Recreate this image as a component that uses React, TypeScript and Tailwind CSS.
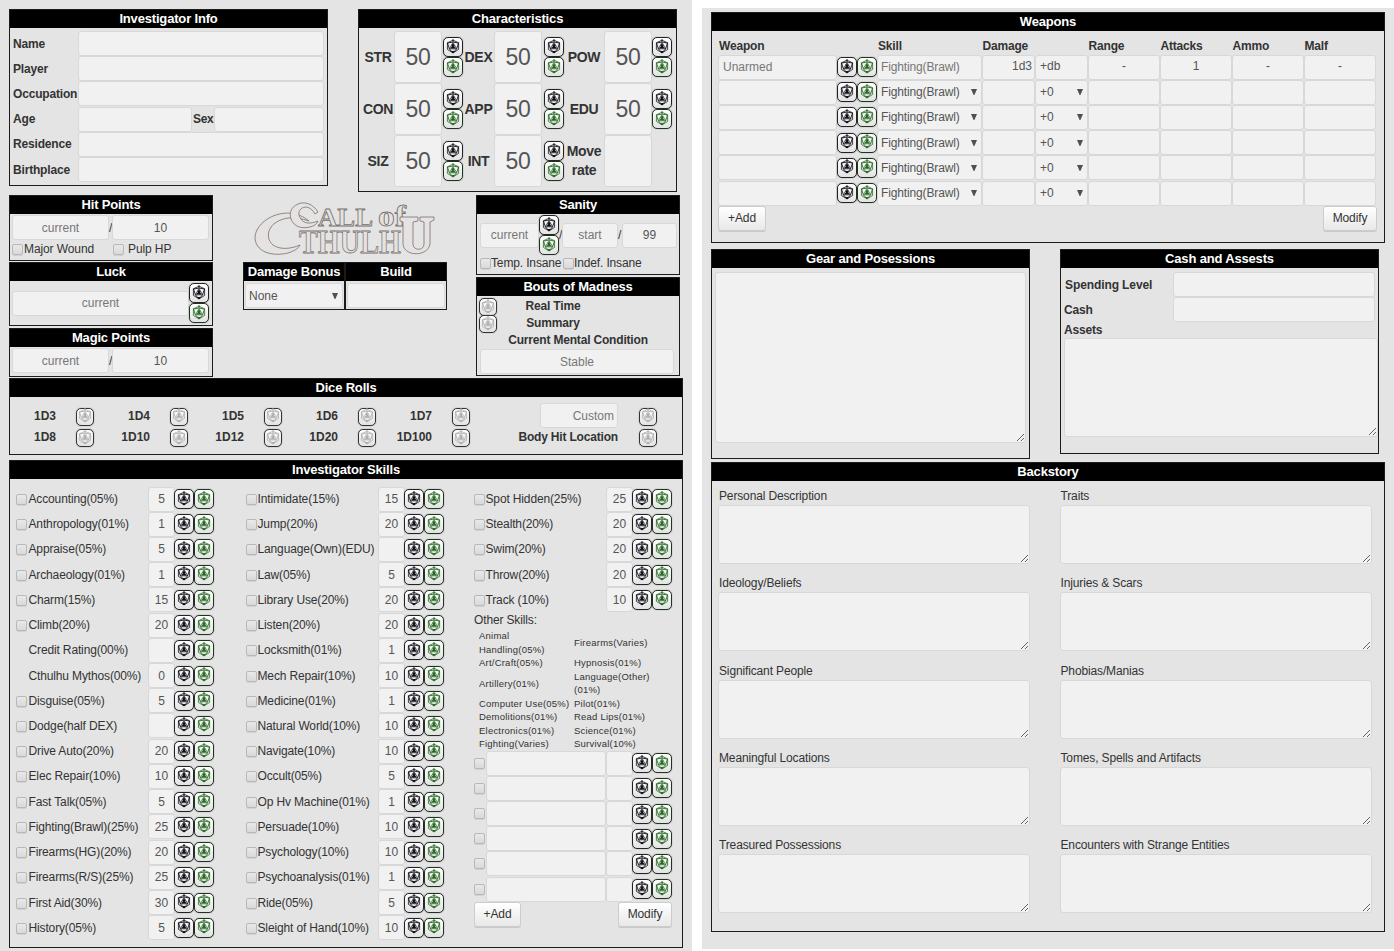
import React from "react";

function Panel({ title, className = "", children }: { title: string; className?: string; children?: React.ReactNode }) {
  return (
    <section className={"flex flex-col border border-[#1c1c1c] " + className}>
      <h2 className="h-[18px] shrink-0 bg-black text-center text-[13px] leading-[17px] font-bold tracking-[-0.17px] text-white">{title}</h2>
      {children}
    </section>
  );
}

const fieldBase =
  "block shrink-0 rounded-[3px] border border-[#d8d8d8] bg-[#f1f1f1] text-[#555] outline-none placeholder:text-[#777] ";

function Field({ className = "", value, hint }: { className?: string; value?: string; hint?: string }) {
  return <input className={fieldBase + "h-[25px] min-w-0 " + className} defaultValue={value} placeholder={hint} />;
}

function Choice({ className = "", value }: { className?: string; value: string }) {
  return (
    <div className={fieldBase + "flex h-[25px] items-center justify-between pr-[4px] pl-[4px] " + className}>
      <span>{value}</span>
      <svg width="6" height="6" viewBox="0 0 6 6" className="shrink-0">
        <path d="M0 0h6L3.4 6h-.8z" fill="#505050" />
      </svg>
    </div>
  );
}

function Area({ className = "" }: { className?: string }) {
  return <textarea className={fieldBase + "resize " + className} />;
}

function Check({ className = "" }: { className?: string }) {
  return (
    <input
      type="checkbox"
      className={
        "block h-[11px] w-[11px] shrink-0 appearance-none rounded-[2px] border border-[#b8b8b8] bg-linear-to-b from-[#e9e9e9] to-[#d9d9d9] shadow-[0_1px_0_#d2d2d2] " +
        className
      }
    />
  );
}

type Tone = "black" | "green" | "pale";

const tones: Record<Tone, { line: string; box: string }> = {
  black: { line: "text-[#101018]", box: "border-[#222] h-5 w-5" },
  green: { line: "text-[#286a24]", box: "border-[#1f331f] h-5 w-5" },
  pale: { line: "text-[#b0b0b4]", box: "border-[#333] h-[18px] w-[18px]" },
};

function Die({ tone, className = "" }: { tone: Tone; className?: string }) {
  const t = tones[tone];
  return (
    <button
      className={
        "flex shrink-0 items-center justify-center rounded-[5px] border bg-linear-to-b from-white to-[#e3e3e3] shadow-[0_0_1px_#555] " +
        t.box +
        " " +
        t.line +
        " " +
        className
      }
    >
      <svg width="14" height="15" viewBox="0 0 14 15" fill="none" stroke="currentColor" className="mb-[2px] shrink-0">
        <path d="M7 1.2 12.6 3.8v6.6L7 14 1.4 10.4V3.8z" strokeWidth="0.8" />
        <path d="M1.4 3.8 3.4 9.8 7 14l3.6-4.2 2-6M1.4 4.1 7 3l5.6 1.1M7 0v3" strokeWidth="0.9" />
        <path d="M7 3.4 3.4 9.8h7.2z" strokeWidth="0.7" />
        <path d="M7 4.4 8.5 6.3 8.1 7.3 9.8 9.6H4.2L5.9 7.3l-.4-1z" fill="currentColor" stroke="none" />
        <path d="M5.4 11.9 7 13.9l1.6-2z" fill="currentColor" stroke="none" />
      </svg>
    </button>
  );
}

function DicePair({ vertical = false, className = "" }: { vertical?: boolean; className?: string }) {
  return (
    <div className={(vertical ? "flex w-5 flex-col " : "flex ") + "shrink-0 " + className}>
      <Die tone="black" />
      <Die tone="green" />
    </div>
  );
}

function Info() {
  const label = "w-[68px] shrink-0 font-bold tracking-[-0.18px]";
  const row = "flex h-[25.2px] items-center";
  return (
    <Panel title="Investigator Info" className="h-[177px] w-[319px]">
      <div className="pt-[3px] pl-[3px]">
        {["Name", "Player", "Occupation"].map((n) => (
          <div key={n} className={row}>
            <span className={label}>{n}</span>
            <Field className="ml-[-3px] w-[246px]" />
          </div>
        ))}
        <div className={row}>
          <span className={label}>Age</span>
          <Field className="ml-[-3px] w-[114px]" />
          <span className="w-[22px] pl-px font-bold tracking-[-0.3px]">Sex</span>
          <Field className="w-[110px]" />
        </div>
        {["Residence", "Birthplace"].map((n) => (
          <div key={n} className={row}>
            <span className={label}>{n}</span>
            <Field className="ml-[-3px] w-[246px]" />
          </div>
        ))}
      </div>
    </Panel>
  );
}

function Stat({ name, labelWidth, diceGap = "ml-px" }: { name: string; labelWidth: string; diceGap?: string }) {
  return (
    <>
      <span className={"shrink-0 text-center text-[14px] leading-[19px] font-bold tracking-[-0.3px] " + labelWidth}>{name}</span>
      <input className={fieldBase + "h-[52px] w-12 text-center text-[23px] tracking-[-0.2px]"} defaultValue={name === "Move rate" ? "" : "50"} />
      {name !== "Move rate" && <DicePair vertical className={diceGap} />}
    </>
  );
}

function Characteristics() {
  const rows = [
    ["STR", "DEX", "POW"],
    ["CON", "APP", "EDU"],
    ["SIZ", "INT", "Move rate"],
  ];
  return (
    <Panel title="Characteristics" className="h-[183px] w-[319px]">
      <div className="pt-[3px] pl-[3px]">
        {rows.map((r) => (
          <div key={r[0]} className="flex h-[52px] items-center">
            <Stat name={r[0]} labelWidth="w-8" />
            <Stat name={r[1]} labelWidth="w-[31px]" diceGap="ml-[2px]" />
            <Stat name={r[2]} labelWidth="w-10 px-px" diceGap="ml-0" />
          </div>
        ))}
      </div>
    </Panel>
  );
}

function Points() {
  return (
    <div className="flex items-center pl-[2px]">
      <Field className="w-[97px] text-center" hint="current" />
      <span className="w-[3px]">/</span>
      <Field className="w-[97px] text-center" value="10" />
    </div>
  );
}

function Logo() {
  return (
    <svg
      width="184"
      height="58"
      viewBox="0 0 184 58"
      className="ml-[9px] overflow-visible"
      fill="#e6e2e1"
      stroke="#77706f"
      strokeWidth="0.8"
      fontFamily="'Liberation Serif', serif"
      fontWeight="bold"
    >
      <path d="M57 21C45 11 30 11 17 18 5 25 0 36 5 45c5 9 19 11 31 8 6-2 10-4 12-8-9 4-20 5-27 0-7-6-6-16 2-22 9-6 19-7 34-2z" />
      <path d="M66 12C61 4 53 1 46 4c-7 3-9 9-7 15 3 8 11 10 19 8 4-1 7-3 8-6-7 3-14 3-17-2-3-4-3-8 1-11 4-2 9-1 13 6z" />
      <text x="66" y="26" fontSize="26" textLength="55" lengthAdjust="spacingAndGlyphs">
        ALL
      </text>
      <text x="126" y="26" fontSize="30" textLength="28" lengthAdjust="spacingAndGlyphs">
        of
      </text>
      <text x="47" y="53" fontSize="34" textLength="102" lengthAdjust="spacingAndGlyphs">
        THULH
      </text>
      <path d="M148 17h18v4l-5 1v22c0 7 11 7 11 0V22l-4-1v-4h14v3l-4 2v22c-2 13-26 13-27 0V22l-3-1z" />
    </svg>
  );
}

function MiddleBlock() {
  return (
    <div className="flex pt-[3px]">
      <div className="flex w-[204px] flex-col">
        <Panel title="Hit Points" className="h-[66px]">
          <div className="pt-[1px]">
            <Points />
            <div className="flex items-center pt-px pl-[2px]">
              <Check />
              <span className="w-[90px] pl-px tracking-[-0.1px]">Major Wound</span>
              <Check />
              <span className="pl-1 tracking-[-0.1px]">Pulp HP</span>
            </div>
          </div>
        </Panel>
        <Panel title="Luck" className="mt-px h-[64px]">
          <div className="flex items-center pt-[2px] pl-[2px]">
            <Field className="w-[177px] text-center" hint="current" />
            <DicePair vertical />
          </div>
        </Panel>
        <Panel title="Magic Points" className="mt-[2px] h-[49px]">
          <div className="pt-[1px]">
            <Points />
          </div>
        </Panel>
      </div>
      <div className="ml-[30px] w-[204px]">
        <div className="h-[67px] pt-[5px]">
          <Logo />
        </div>
        <div className="flex">
          <Panel title="Damage Bonus" className="h-[48px] w-[102px]">
            <Choice className="mx-px mt-[2px] w-[98px] !pl-[3px]" value="None" />
          </Panel>
          <Panel title="Build" className="h-[48px] w-[102px]">
            <Field className="mx-px mt-[2px] w-[98px]" />
          </Panel>
        </div>
      </div>
      <div className="ml-[29px] w-[204px]">
        <Panel title="Sanity" className="h-[80px]">
          <div className="flex items-center pt-[1px] pl-[3px]">
            <Field className="w-[59px] text-center" hint="current" />
            <DicePair vertical />
            <span className="w-[3px]">/</span>
            <Field className="w-[56px] text-center" hint="start" />
            <span className="w-[4px]">/</span>
            <Field className="w-[55px] text-center" value="99" />
          </div>
          <div className="flex items-center pl-[3px] tracking-[-0.14px]">
            <Check />
            <span className="w-[72px] shrink-0 whitespace-nowrap">Temp. Insane</span>
            <Check />
            <span className="whitespace-nowrap">Indef. Insane</span>
          </div>
        </Panel>
        <Panel title="Bouts of Madness" className="mt-[2px] h-[99px]">
          <div className="flex pt-[1px] pl-[2px] font-bold tracking-[-0.15px]">
            <div className="flex flex-col pt-px">
              <Die tone="pale" />
              <Die tone="pale" className="-mt-px" />
            </div>
            <div className="w-[112px] pt-px text-center leading-[17px]">
              <div>Real Time</div>
              <div>Summary</div>
            </div>
          </div>
          <div className="-mt-px text-center leading-[17px] font-bold tracking-[-0.18px]">Current Mental Condition</div>
          <Field className="ml-[3px] w-[194px] text-center" hint="Stable" />
        </Panel>
      </div>
    </div>
  );
}

function DiceRolls() {
  const rows = [
    ["1D3", "1D4", "1D5", "1D6", "1D7"],
    ["1D8", "1D10", "1D12", "1D20", "1D100"],
  ];
  return (
    <Panel title="Dice Rolls" className="mt-px h-[77px] w-[674px]">
      <div className="pt-[9px]">
        {rows.map((r, i) => (
          <div key={i} className="flex h-[21.5px] items-center font-bold">
            {r.map((d, j) => (
              <div key={d} className={"flex shrink-0 items-center " + (j === 0 ? "w-[84px]" : "w-[94px]")}>
                <span className="grow -translate-y-px text-right">{d}</span>
                <Die tone="pale" className="ml-5" />
              </div>
            ))}
            <div className="flex w-[148px] -translate-y-px justify-end">
              {i === 0 ? <Field className="w-[78px] pr-[3px] text-right font-normal" hint="Custom" /> : <span className="tracking-[-0.18px]">Body Hit Location</span>}
            </div>
            <Die tone="pale" className="ml-[21px]" />
          </div>
        ))}
      </div>
    </Panel>
  );
}

type Skill = [name: string, value: string, unchecked?: boolean];

const firstSkills: Skill[] = [
  ["Accounting(05%)", "5"],
  ["Anthropology(01%)", "1"],
  ["Appraise(05%)", "5"],
  ["Archaeology(01%)", "1"],
  ["Charm(15%)", "15"],
  ["Climb(20%)", "20"],
  ["Credit Rating(00%)", "", true],
  ["Cthulhu Mythos(00%)", "0", true],
  ["Disguise(05%)", "5"],
  ["Dodge(half DEX)", ""],
  ["Drive Auto(20%)", "20"],
  ["Elec Repair(10%)", "10"],
  ["Fast Talk(05%)", "5"],
  ["Fighting(Brawl)(25%)", "25"],
  ["Firearms(HG)(20%)", "20"],
  ["Firearms(R/S)(25%)", "25"],
  ["First Aid(30%)", "30"],
  ["History(05%)", "5"],
];

const secondSkills: Skill[] = [
  ["Intimidate(15%)", "15"],
  ["Jump(20%)", "20"],
  ["Language(Own)(EDU)", ""],
  ["Law(05%)", "5"],
  ["Library Use(20%)", "20"],
  ["Listen(20%)", "20"],
  ["Locksmith(01%)", "1"],
  ["Mech Repair(10%)", "10"],
  ["Medicine(01%)", "1"],
  ["Natural World(10%)", "10"],
  ["Navigate(10%)", "10"],
  ["Occult(05%)", "5"],
  ["Op Hv Machine(01%)", "1"],
  ["Persuade(10%)", "10"],
  ["Psychology(10%)", "10"],
  ["Psychoanalysis(01%)", "1"],
  ["Ride(05%)", "5"],
  ["Sleight of Hand(10%)", "10"],
];

const thirdSkills: Skill[] = [
  ["Spot Hidden(25%)", "25"],
  ["Stealth(20%)", "20"],
  ["Swim(20%)", "20"],
  ["Throw(20%)", "20"],
  ["Track (10%)", "10"],
];

function SkillRows({ skills, first = false }: { skills: Skill[]; first?: boolean }) {
  return (
    <>
      {skills.map(([name, value, plain]) => (
        <div key={name} className="flex h-[25.22px] items-center">
          <Check className={"mt-px " + (plain ? "invisible" : "")} />
          <span className={"w-[121px] shrink-0 tracking-[-0.14px] whitespace-nowrap " + (first ? "pl-[1.5px]" : "pl-[0.5px]")}>{name}</span>
          <Field className="w-[27px] text-center" value={value} />
          <DicePair className="-ml-px" />
        </div>
      ))}
    </>
  );
}

function ActionButton({ children, className = "" }: { children: React.ReactNode; className?: string }) {
  return (
    <button className={"h-[25px] rounded-[3px] border border-[#ccc] bg-linear-to-b from-white to-[#e8e8e8] tracking-[-0.1px] text-[#333] shadow-[0_1px_0_#c8c8c8] " + className}>
      {children}
    </button>
  );
}

const otherLeft = [
  ["Animal Handling(05%)", "h-[27px] w-[70px]"],
  ["Art/Craft(05%)", "h-[13.5px]"],
  ["Artillery(01%)", "h-[27px]"],
  ["Computer Use(05%)", "h-[13.5px]"],
  ["Demolitions(01%)", "h-[13.5px]"],
  ["Electronics(01%)", "h-[13.5px]"],
  ["Fighting(Varies)", "h-[13.5px]"],
];

const otherRight = [
  ["Firearms(Varies)", "h-[27px]"],
  ["Hypnosis(01%)", "h-[13.5px]"],
  ["Language(Other) (01%)", "h-[27px] w-[80px]"],
  ["Pilot(01%)", "h-[13.5px]"],
  ["Read Lips(01%)", "h-[13.5px]"],
  ["Science(01%)", "h-[13.5px]"],
  ["Survival(10%)", "h-[13.5px]"],
];

function OtherList({ items, className }: { items: string[][]; className: string }) {
  return (
    <div className={"text-[9.5px] leading-[13.5px] tracking-[0.22px] " + className}>
      {items.map(([n, h]) => (
        <div key={n} className={"flex items-center " + h}>
          <span>{n}</span>
        </div>
      ))}
    </div>
  );
}

function Skills() {
  return (
    <Panel title="Investigator Skills" className="mt-[5px] h-[488px] w-[674px]">
      <div className="flex pt-[7.4px] pl-[6px]">
        <div className="w-[230px]">
          <SkillRows skills={firstSkills} first />
        </div>
        <div className="w-[228px]">
          <SkillRows skills={secondSkills} />
        </div>
        <div className="w-[200px]">
          <SkillRows skills={thirdSkills} />
          <div className="h-[17px] leading-[17px] tracking-[-0.14px]">Other Skills:</div>
          <div className="flex h-[121px] pl-[5px] whitespace-normal">
            <OtherList items={otherLeft} className="w-[95px]" />
            <OtherList items={otherRight} className="w-[90px]" />
          </div>
          {[0, 1, 2, 3, 4, 5].map((i) => (
            <div key={i} className="flex h-[25.22px] items-center">
              <Check />
              <Field className="ml-px w-[120px]" />
              <Field className="w-[27px]" />
              <DicePair className="-ml-px" />
            </div>
          ))}
          <div className="flex justify-between">
            <ActionButton className="w-[47px]">+Add</ActionButton>
            <ActionButton className="mr-[2px] w-[54px]">Modify</ActionButton>
          </div>
        </div>
      </div>
    </Panel>
  );
}

const weaponColumns: [string, string][] = [
  ["Weapon", "w-[159px]"],
  ["Skill", "w-[104.5px]"],
  ["Damage", "w-[106px]"],
  ["Range", "w-[72px]"],
  ["Attacks", "w-[72px]"],
  ["Ammo", "w-[72px]"],
  ["Malf", "w-[72px]"],
];

function Weapons() {
  const cells = ["-", "1", "-", "-"];
  return (
    <Panel title="Weapons" className="h-[231px] w-[674px]">
      <div className="pt-[6px] pl-[6px]">
        <div className="flex h-[17.5px] items-center pl-px font-bold tracking-[-0.18px]">
          {weaponColumns.map(([n, w]) => (
            <span key={n} className={"shrink-0 " + w}>
              {n}
            </span>
          ))}
        </div>
        {[0, 1, 2, 3, 4, 5].map((i) => (
          <div key={i} className="flex h-[25.2px] items-center">
            <Field className="w-[119px] pl-1" hint={i === 0 ? "Unarmed" : ""} />
            <DicePair />
            {i === 0 ? (
              <Field className="w-[105px] pl-[3px] tracking-[-0.14px]" hint="Fighting(Brawl)" />
            ) : (
              <Choice className="w-[105px] !pl-[3px] tracking-[-0.14px]" value="Fighting(Brawl)" />
            )}
            <Field className="w-[53px] pr-[2px] pb-[2px] text-right" value={i === 0 ? "1d3" : ""} />
            {i === 0 ? <Field className="w-[53px] pb-[2px] pl-1" value="+db" /> : <Choice className="w-[53px]" value="+0" />}
            {cells.map((c, j) => (
              <Field key={j} className="w-[72px] pb-[2px] text-center" value={i === 0 ? c : ""} />
            ))}
          </div>
        ))}
        <div className="flex w-[659px] justify-between">
          <ActionButton className="w-[48px]">+Add</ActionButton>
          <ActionButton className="w-[54px]">Modify</ActionButton>
        </div>
      </div>
    </Panel>
  );
}

function GearAndCash() {
  return (
    <div className="mt-[6px] flex h-[213px] items-start">
      <Panel title="Gear and Posessions" className="h-[210px] w-[319px]">
        <Area className="mt-[4px] ml-[3px] h-[171px] w-[311px]" />
      </Panel>
      <Panel title="Cash and Assests" className="ml-[30px] h-[205px] w-[319px]">
        <div className="pt-[4px] pl-[3px] font-bold tracking-[-0.18px]">
          <div className="flex h-[25.2px] items-center">
            <span className="w-[109px] pl-px tracking-[-0.1px]">Spending Level</span>
            <Field className="w-[202px]" />
          </div>
          <div className="flex h-[25.2px] items-center">
            <span className="w-[109px]">Cash</span>
            <Field className="w-[202px]" />
          </div>
          <div className="h-[16px] leading-[16px]">Assets</div>
          <Area className="h-[99px] w-[314px]" />
        </div>
      </Panel>
    </div>
  );
}

function Backstory() {
  const topics = [
    "Personal Description",
    "Traits",
    "Ideology/Beliefs",
    "Injuries & Scars",
    "Significant People",
    "Phobias/Manias",
    "Meaningful Locations",
    "Tomes, Spells and Artifacts",
    "Treasured Possessions",
    "Encounters with Strange Entities",
  ];
  return (
    <Panel title="Backstory" className="h-[470px] w-[674px]">
      <div className="grid grid-cols-[341.5px_312px] pt-[6px] pl-[6px]">
        {topics.map((t) => (
          <div key={t} className="h-[87.3px]">
            <div className="h-[18px] pl-px leading-[19px] tracking-[-0.14px]">{t}</div>
            <Area className="h-[59px] w-[312px]" />
          </div>
        ))}
      </div>
    </Panel>
  );
}

export default function App() {
  return (
    <div className="flex h-[951px] w-[1394px] items-start gap-[10px] overflow-hidden bg-white font-['Liberation_Sans',Arial,sans-serif] text-[12px] leading-[16px] text-[#333]">
      <main className="h-[951px] w-[692px] bg-[#e4e4e4] pt-[9px] pl-[9px]">
        <div className="flex h-[183px] items-start gap-[30px]">
          <Info />
          <Characteristics />
        </div>
        <MiddleBlock />
        <DiceRolls />
        <Skills />
      </main>
      <main className="mt-[8px] h-[941px] w-[692px] bg-[#e4e4e4] pt-[4px] pl-[9px]">
        <Weapons />
        <GearAndCash />
        <Backstory />
      </main>
    </div>
  );
}
